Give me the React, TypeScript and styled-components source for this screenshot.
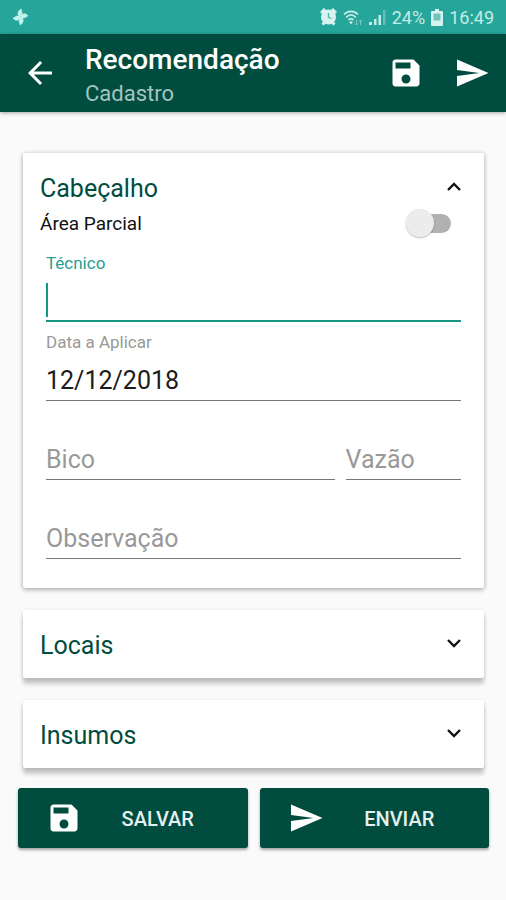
import React, { useState } from 'react';
import styled, { createGlobalStyle } from 'styled-components';

const GlobalStyle = createGlobalStyle`
  *, *::before, *::after { box-sizing: border-box; }
  body {
    margin: 0;
    background: #fafafa;
    font-family: Roboto, "Liberation Sans", sans-serif;
  }
  button, input { font-family: inherit; }
`;

const Screen = styled.div`
  min-height: 100vh;
  background: #fafafa;
`;

const StatusBar = styled.div`
  display: flex;
  align-items: center;
  justify-content: space-between;
  height: 34px;
  padding: 0 12px;
  background: #26a69a;
  color: #c4ebe6;
  font-size: 18px;
`;

const StatusGroup = styled.div`
  display: flex;
  align-items: center;
  gap: 6px;
`;

const AppBar = styled.header`
  display: flex;
  align-items: center;
  height: 78px;
  padding: 0 16px 0 22px;
  background: #004d40;
  color: #fff;
  box-shadow: 0 1px 4px rgba(0, 0, 0, 0.35);
`;

const IconButton = styled.button`
  display: flex;
  padding: 0;
  border: 0;
  background: none;
  color: inherit;
  cursor: pointer;
`;

const Titles = styled.div`
  flex: 1;
  min-width: 0;
  margin-left: 27px;
  padding-top: 8px;
`;

const Title = styled.h1`
  margin: 0;
  font-size: 28px;
  line-height: 34px;
  font-weight: 500;
`;

const Subtitle = styled.p`
  margin: 0;
  font-size: 22px;
  line-height: 34px;
  color: #a3c4be;
`;

const BarActions = styled.div`
  display: flex;
  gap: 30px;
`;

const Form = styled.form`
  padding: 41px 17px 0 18px;
`;

const Sections = styled.div`
  display: flex;
  flex-direction: column;
  gap: 22px;
  padding: 0 5px;
`;

const Card = styled.section<{ $open: boolean }>`
  padding: ${({ $open }) => ($open ? '17px 23px 29px 17px' : '17px 23px 17px 17px')};
  border-radius: 2px;
  background: #fff;
  box-shadow: ${({ $open }) =>
    $open
      ? '0 2px 5px rgba(0, 0, 0, 0.26), 0 0 4px rgba(0, 0, 0, 0.14)'
      : '0 6px 4px rgba(0, 0, 0, 0.2), 0 1px 4px rgba(0, 0, 0, 0.12)'};
`;

const CardHeader = styled.button`
  display: flex;
  align-items: center;
  justify-content: space-between;
  width: 100%;
  height: 34px;
  padding: 0;
  border: 0;
  background: none;
  color: #004d40;
  font-size: 25px;
  text-align: left;
  cursor: pointer;
`;

const CardTitle = styled.span`
  padding-top: 2px;
`;

const SwitchRow = styled.label`
  display: flex;
  align-items: center;
  justify-content: space-between;
  height: 39px;
  padding-right: 10px;
  color: #111;
  font-size: 19px;
`;

const Switch = styled.input`
  appearance: none;
  position: relative;
  width: 42px;
  height: 19px;
  margin: 0;
  border-radius: 10px;
  background: #b1b1b1;
  cursor: pointer;

  &::before {
    content: '';
    position: absolute;
    top: -5px;
    left: -3px;
    width: 28px;
    height: 28px;
    border-radius: 50%;
    background: #ececec;
    box-shadow: 0 1px 2px rgba(0, 0, 0, 0.25);
  }
  &:checked { background: #80cbc4; }
  &:checked::before { left: 17px; background: #009688; }
`;

const Fields = styled.div`
  padding-left: 6px;
`;

const FieldPair = styled.div`
  display: grid;
  grid-template-columns: 5fr 2fr;
  gap: 11px;
`;

const FieldBox = styled.label`
  position: relative;
  display: block;
  min-width: 0;
  padding-top: 10px;
`;

const FieldLabel = styled.span<{ $active?: boolean }>`
  display: block;
  height: 20px;
  font-size: 17px;
  line-height: 20px;
  color: ${({ $active }) => ($active ? '#26a08f' : '#999')};
`;

const FieldInput = styled.input<{ $active?: boolean }>`
  display: block;
  width: 100%;
  height: 49px;
  padding: 8px 0 0;
  border: 0;
  border-bottom: ${({ $active }) => ($active ? '2px solid #159583' : '1px solid #777')};
  border-radius: 0;
  outline: 0;
  background: transparent;
  color: #1c1c1c;
  font-size: 25px;
  caret-color: ${({ $active }) => ($active ? 'transparent' : '#159583')};

  &::placeholder { color: #999; opacity: 1; }
`;

const Caret = styled.span`
  position: absolute;
  left: 0;
  bottom: 5px;
  width: 2px;
  height: 34px;
  background: #159583;
`;

const Actions = styled.div`
  display: grid;
  grid-template-columns: 1fr 1fr;
  gap: 12px;
  margin-top: 20px;
`;

const ActionButton = styled.button`
  display: flex;
  align-items: center;
  height: 60px;
  padding: 0 14px 0 28px;
  border: 0;
  border-radius: 3px;
  background: #004d40;
  color: #fff;
  font-size: 20px;
  font-weight: 500;
  box-shadow: 0 2px 3px rgba(0, 0, 0, 0.35);
  cursor: pointer;
`;

const ActionText = styled.span`
  flex: 1;
  padding-top: 2px;
  text-align: center;
  color: #e6f0ee;
`;

const PinwheelIcon = () => (
  <svg width="17" height="18" viewBox="0 0 16 18" fill="#c4f2ec" stroke="#c4f2ec" strokeWidth="0.8" strokeLinejoin="round" aria-hidden="true">
    <path d="M7.600 8.600C4.800 7 4.600 3.400 8.600 1c-.3 1.600 2 3 .2 6.500z" />
    <path d="M8.300 8.400C9.500 5.400 13 4.600 15.500 8c-1.700-.1-2.800 2.800-6.200 1.800z" />
    <path d="M8.500 9.300C11.200 10.900 11.600 14.600 7.600 17c.3-1.700-2-3-.4-6.400z" />
    <path d="M7.700 9.400C6.400 12.500 3 13.400.5 10c1.700.1 2.800-2.800 6.200-1.800z" />
  </svg>
);

const AlarmIcon = () => (
  <svg width="17" height="18" viewBox="0 0 17 18" aria-hidden="true">
    <path d="M1 5 5 1M16 5 12 1M2.500 16.500l3-3M14.500 16.500l-3-3" stroke="#d8f3ef" strokeWidth="3" />
    <circle cx="8.500" cy="9" r="7.500" fill="#d8f3ef" />
    <path d="M8.500 5v4.500l3 1" fill="none" stroke="#4fb5ab" strokeWidth="1.300" />
  </svg>
);

const WifiIcon = () => (
  <svg width="20" height="17" viewBox="0 0 20 17" fill="none" stroke="#c4ebe6" aria-hidden="true">
    <path d="M1 5.500c4-4.300 10-4.300 14 0M3.200 8.300c3-3 6.600-3 9.600 0M5.400 11c1.600-1.600 3.600-1.600 5.200 0" strokeWidth="1.700" />
    <path d="M8 15.500 6 13q2-1.500 4 0z" fill="#c4ebe6" stroke="none" />
    <path d="M13.500 11v5M12 14.500l1.500 1.500 1.500-1.500M17.500 16v-5M16 12.500l1.500-1.500 1.500 1.500" stroke="#7fcbc3" />
  </svg>
);

const SignalIcon = () => (
  <svg width="17" height="16" viewBox="0 0 17 16" aria-hidden="true">
    <path d="M0 13h3v3H0zM5 10h2.500v6H5zM9.500 6H12v10H9.500z" fill="#c4ebe6" />
    <path d="M14 1h2.500v15H14z" fill="#62bdb4" />
  </svg>
);

const BatteryIcon = () => (
  <svg width="12" height="17" viewBox="0 0 12 17" aria-hidden="true">
    <path d="M4 0h4v2h3q1 0 1 1v13q0 1-1 1H1q-1 0-1-1V3q0-1 1-1h3z" fill="#d8f3ef" />
    <path d="M2.500 4.500h7v7h-7z" fill="#6fc3bb" />
  </svg>
);

const BackIcon = () => (
  <svg width="36" height="36" viewBox="0 0 24 24" fill="currentColor" aria-hidden="true">
    <path d="M20 11H7.830l5.590-5.590L12 4l-8 8 8 8 1.410-1.410L7.830 13H20v-2z" />
  </svg>
);

const SaveIcon = () => (
  <svg width="36" height="36" viewBox="0 0 24 24" fill="currentColor" aria-hidden="true">
    <path d="M17 3H5c-1.110 0-2 .9-2 2v14c0 1.100.89 2 2 2h14c1.100 0 2-.9 2-2V7l-4-4zm-5 16c-1.660 0-3-1.340-3-3s1.340-3 3-3 3 1.340 3 3-1.340 3-3 3zm3-10H5V5h10v4z" />
  </svg>
);

const SendIcon = () => (
  <svg width="36" height="36" viewBox="0 0 24 24" fill="currentColor" aria-hidden="true">
    <path d="M2.010 21L23 12 2.010 3 2 10l15 2-15 2z" />
  </svg>
);

const Chevron = ({ up }: { up: boolean }) => (
  <svg width="14" height="10" viewBox="0 0 14 10" fill="none" stroke="#111" strokeWidth="2.400" aria-hidden="true">
    <path d={up ? 'M1 8l6-6 6 6' : 'M1 1l6 6 6-6'} />
  </svg>
);

interface SectionProps {
  title: string;
  defaultOpen?: boolean;
  children?: React.ReactNode;
}

const Section = ({ title, defaultOpen = false, children }: SectionProps) => {
  const [open, setOpen] = useState(defaultOpen);
  return (
    <Card $open={open}>
      <CardHeader type="button" aria-expanded={open} onClick={() => setOpen(!open)}>
        <CardTitle>{title}</CardTitle>
        <Chevron up={open} />
      </CardHeader>
      {open && children}
    </Card>
  );
};

interface FieldProps {
  name: string;
  label: string;
  initial?: string;
  active?: boolean;
}

const Field = ({ name, label, initial = '', active = false }: FieldProps) => {
  const [value, setValue] = useState(initial);
  const floating = active || value !== '';
  return (
    <FieldBox>
      <FieldLabel $active={active}>{floating ? label : ''}</FieldLabel>
      <FieldInput
        $active={active}
        name={name}
        aria-label={label}
        placeholder={floating ? undefined : label}
        value={value}
        onChange={(e) => setValue(e.target.value)}
      />
      {active && value === '' && <Caret />}
    </FieldBox>
  );
};

export default function App() {
  return (
    <Screen>
      <GlobalStyle />
      <StatusBar>
        <PinwheelIcon />
        <StatusGroup>
          <AlarmIcon />
          <WifiIcon />
          <SignalIcon />
          <span>24%</span>
          <BatteryIcon />
          <span>16:49</span>
        </StatusGroup>
      </StatusBar>
      <AppBar>
        <IconButton type="button" aria-label="Voltar"><BackIcon /></IconButton>
        <Titles>
          <Title>Recomendação</Title>
          <Subtitle>Cadastro</Subtitle>
        </Titles>
        <BarActions>
          <IconButton type="button" aria-label="Salvar"><SaveIcon /></IconButton>
          <IconButton type="button" aria-label="Enviar"><SendIcon /></IconButton>
        </BarActions>
      </AppBar>
      <Form onSubmit={(e) => e.preventDefault()}>
        <Sections>
          <Section title="Cabeçalho" defaultOpen>
            <SwitchRow>
              Área Parcial
              <Switch type="checkbox" role="switch" />
            </SwitchRow>
            <Fields>
              <Field name="tecnico" label="Técnico" active />
              <Field name="data" label="Data a Aplicar" initial="12/12/2018" />
              <FieldPair>
                <Field name="bico" label="Bico" />
                <Field name="vazao" label="Vazão" />
              </FieldPair>
              <Field name="observacao" label="Observação" />
            </Fields>
          </Section>
          <Section title="Locais" />
          <Section title="Insumos" />
        </Sections>
        <Actions>
          <ActionButton type="submit">
            <SaveIcon />
            <ActionText>SALVAR</ActionText>
          </ActionButton>
          <ActionButton type="button">
            <SendIcon />
            <ActionText>ENVIAR</ActionText>
          </ActionButton>
        </Actions>
      </Form>
    </Screen>
  );
}
